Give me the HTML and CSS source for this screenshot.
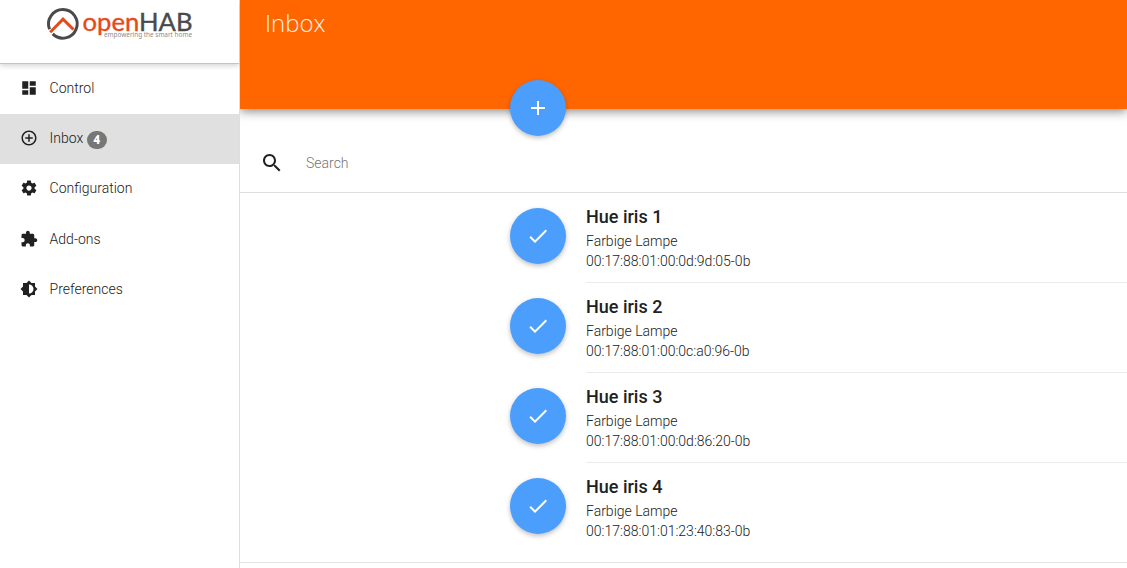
FILE: index.html
```html
<!DOCTYPE html>
<html lang="en">
<head>
<meta charset="utf-8">
<title>Inbox</title>
<link rel="stylesheet" href="styles.css">
</head>
<body>
<div class="app">
  <aside class="sidebar">
    <div class="brand">
      <svg class="logo" width="160" height="48" viewBox="0 0 160 48">
        <path d="M4.100 23.200A14.300 14.300 0 1 1 7.200 27.900" transform="translate(.5 0)" fill="none" stroke="#4a4a4c" stroke-width="3"/>
        <path d="M5.200 26.300L18 13.100L28.500 23.500" fill="none" stroke="#e64a19" stroke-width="3"/>
        <text class="logo-name" x="37.500" y="25" textLength="110" lengthAdjust="spacingAndGlyphs"><tspan class="open">open</tspan><tspan class="hab">HAB</tspan></text>
        <text class="logo-tag" x="59" y="30.700" textLength="88" lengthAdjust="spacingAndGlyphs">empowering the smart home</text>
      </svg>
    </div>
    <nav class="nav">
      <a class="nav-item"><svg class="icon" viewBox="0 0 24 24"><path d="M3 13h8V3H3v10zm0 8h8v-6H3v6zm10 0h8V11h-8v10zm0-18v6h8V3h-8z"/></svg><span>Control</span></a>
      <a class="nav-item active"><svg class="icon" viewBox="0 0 24 24"><path d="M13 7h-2v4H7v2h4v4h2v-4h4v-2h-4V7zm-1-5C6.48 2 2 6.48 2 12s4.480 10 10 10 10-4.480 10-10S17.520 2 12 2zm0 18c-4.410 0-8-3.590-8-8s3.590-8 8-8 8 3.590 8 8-3.590 8-8 8z"/></svg><span>Inbox</span><span class="badge">4</span></a>
      <a class="nav-item"><svg class="icon" viewBox="0 0 24 24"><path d="M19.430 12.980c.04-.32.07-.64.07-.98s-.03-.66-.07-.98l2.110-1.650c.19-.15.24-.42.12-.64l-2-3.460c-.12-.22-.39-.3-.61-.22l-2.490 1c-.52-.4-1.080-.73-1.690-.98l-.38-2.650C14.460 2.180 14.250 2 14 2h-4c-.25 0-.46.18-.49.42l-.38 2.650c-.61.25-1.170.59-1.690.98l-2.490-1c-.23-.09-.49 0-.61.22l-2 3.460c-.13.22-.07.49.12.64l2.110 1.650c-.04.32-.07.65-.07.98s.03.66.07.98l-2.110 1.650c-.19.15-.24.42-.12.64l2 3.460c.12.22.39.3.61.22l2.490-1c.52.4 1.080.73 1.690.98l.38 2.650c.03.24.24.42.49.42h4c.25 0 .46-.18.49-.42l.38-2.650c.61-.25 1.170-.59 1.690-.98l2.490 1c.23.09.49 0 .61-.22l2-3.460c.12-.22.07-.49-.12-.64l-2.110-1.650zM12 15.500c-1.930 0-3.500-1.570-3.500-3.500s1.570-3.500 3.500-3.500 3.500 1.570 3.500 3.500-1.570 3.500-3.500 3.500z"/></svg><span>Configuration</span></a>
      <a class="nav-item"><svg class="icon" viewBox="0 0 24 24"><path d="M20.500 11H19V7c0-1.100-.9-2-2-2h-4V3.500C13 2.120 11.880 1 10.500 1S8 2.120 8 3.500V5H4c-1.100 0-1.990.9-1.990 2v3.800H3.500c1.490 0 2.700 1.210 2.700 2.700s-1.210 2.700-2.700 2.700H2V20c0 1.100.9 2 2 2h3.800v-1.500c0-1.490 1.210-2.700 2.700-2.700 1.490 0 2.700 1.210 2.700 2.700V22H17c1.100 0 2-.9 2-2v-4h1.500c1.380 0 2.500-1.120 2.500-2.500S21.880 11 20.500 11z"/></svg><span>Add-ons</span></a>
      <a class="nav-item"><svg class="icon" viewBox="0 0 24 24"><path d="M20 15.310L23.310 12 20 8.690V4h-4.690L12 .69 8.690 4H4v4.690L.69 12 4 15.310V20h4.690L12 23.310 15.310 20H20v-4.690zM12 18V6c3.310 0 6 2.690 6 6s-2.690 6-6 6z"/></svg><span>Preferences</span></a>
    </nav>
  </aside>
  <main class="main">
    <header class="toolbar">
      <h1 class="title">Inbox</h1>
      <button class="fab fab-add"><svg width="24" height="24" viewBox="0 0 24 24"><path d="M19 13h-6v6h-2v-6H5v-2h6V5h2v6h6v2z"/></svg></button>
    </header>
    <div class="search">
      <svg class="search-icon" viewBox="0 0 24 24"><path d="M15.500 14h-.79l-.28-.27C15.410 12.590 16 11.110 16 9.500 16 5.910 13.090 3 9.500 3S3 5.910 3 9.500 5.910 16 9.500 16c1.610 0 3.090-.59 4.230-1.570l.27.28v.79l5 4.990L20.490 19l-4.990-5zm-6 0C7.010 14 5 11.990 5 9.500S7.010 5 9.500 5 14 7.010 14 9.500 11.990 14 9.500 14z"/></svg>
      <span>Search</span>
    </div>
    <ul class="things">
      <li class="thing">
        <button class="fab"><svg width="24" height="24" viewBox="0 0 24 24"><path d="M9 16.170L4.830 12l-1.420 1.410L9 19 21 7l-1.410-1.410z"/></svg></button>
        <div class="info"><h2>Hue iris 1</h2><p>Farbige Lampe</p><p>00:17:88:01:00:0d:9d:05-0b</p></div>
      </li>
      <li class="thing">
        <button class="fab"><svg width="24" height="24" viewBox="0 0 24 24"><path d="M9 16.170L4.830 12l-1.420 1.410L9 19 21 7l-1.410-1.410z"/></svg></button>
        <div class="info"><h2>Hue iris 2</h2><p>Farbige Lampe</p><p>00:17:88:01:00:0c:a0:96-0b</p></div>
      </li>
      <li class="thing">
        <button class="fab"><svg width="24" height="24" viewBox="0 0 24 24"><path d="M9 16.170L4.830 12l-1.420 1.410L9 19 21 7l-1.410-1.410z"/></svg></button>
        <div class="info"><h2>Hue iris 3</h2><p>Farbige Lampe</p><p>00:17:88:01:00:0d:86:20-0b</p></div>
      </li>
      <li class="thing">
        <button class="fab"><svg width="24" height="24" viewBox="0 0 24 24"><path d="M9 16.170L4.830 12l-1.420 1.410L9 19 21 7l-1.410-1.410z"/></svg></button>
        <div class="info"><h2>Hue iris 4</h2><p>Farbige Lampe</p><p>00:17:88:01:01:23:40:83-0b</p></div>
      </li>
    </ul>
  </main>
</div>
</body>
</html>
```
FILE: styles.css
```css
* { box-sizing: border-box; }
body {
  margin: 0;
  overflow: hidden;
  background: #fff;
  color: #212121;
  font: 300 14px/20px Roboto, sans-serif;
}
h1, h2, p, ul { margin: 0; padding: 0; }
.app { display: flex; height: 568px; }
.sidebar {
  width: 240px;
  flex: none;
  border-right: 1px solid #dedede;
}
.brand {
  height: 64px;
  padding: 6px 0 0 45px;
  border-bottom: 1px solid #c4c4c4;
  box-shadow: 0 2px 5px rgba(0, 0, 0, 0.16);
}
.logo { display: block; overflow: visible; }
.logo-name { font: 400 25px Lato, sans-serif; stroke-width: 0.35px; }
.open { fill: #e64a19; stroke: #e64a19; }
.hab { fill: #4a4a4c; stroke: #4a4a4c; }
.logo-tag { font: 400 7px "Noto Sans", sans-serif; fill: #8c8c8c; }
.nav { display: flex; flex-direction: column; }
.nav-item {
  display: flex;
  align-items: center;
  height: 50.3px;
  padding: 0 20px 2px;
}
.nav-item.active { background: #e0e0e0; height: 50px; }
.icon { width: 18px; height: 18px; margin-right: 11.6px; fill: #212121; }
.badge {
  min-width: 20px;
  height: 18px;
  margin: 4px 0 0 3.5px;
  border-radius: 10px;
  background: #777;
  color: #fff;
  font-size: 12px;
  font-weight: 900;
  line-height: 18px;
  text-align: center;
}
.main { flex: 1; min-width: 0; overflow: hidden; }
.toolbar {
  position: relative;
  height: 109px;
  padding: 6px 25px;
  background: #ff6600;
  box-shadow: 0 2px 10px rgba(0, 0, 0, 0.5);
}
.title {
  color: rgba(255, 255, 255, 0.92);
  font: 300 24px/33px "Open Sans", sans-serif;
}
.fab {
  display: flex;
  align-items: center;
  justify-content: center;
  flex: none;
  width: 56px;
  height: 56px;
  padding: 0;
  border: 0;
  border-radius: 50%;
  background: #4b9efc;
  box-shadow: 0 2px 5px rgba(0, 0, 0, 0.26);
}
.fab svg { fill: #fff; }
.fab-add { position: absolute; left: 270px; top: 80px; }
.search {
  display: flex;
  align-items: center;
  height: 84px;
  padding: 24px 20px 0;
  border-bottom: 1px solid #dedede;
  color: #757575;
}
.search-icon { width: 24px; height: 24px; margin-right: 22px; fill: #212121; }
.things {
  height: 370px;
  border-bottom: 1px solid #e4e4e4;
  list-style: none;
}
.thing { display: flex; gap: 20px; height: 90px; padding-left: 270px; }
.thing .fab { margin-top: 15px; }
.info { flex: 1; padding-top: 12px; border-bottom: 1px solid #ebebeb; }
.thing:last-child .info { border-bottom: 0; }
.info h2 { margin-bottom: 3px; font-size: 18px; font-weight: 500; line-height: 23px; }
```
